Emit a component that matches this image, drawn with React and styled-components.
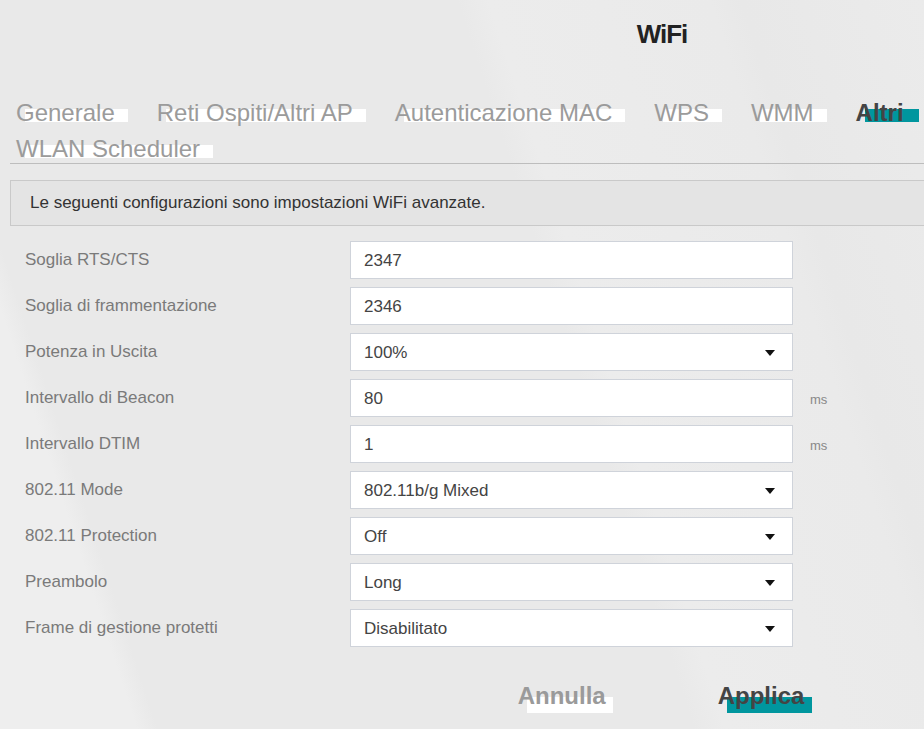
import React from "react";
import styled, { createGlobalStyle } from "styled-components";

const GlobalStyle = createGlobalStyle`
  html, body {
    margin: 0;
    padding: 0;
    height: 100%;
    overflow: hidden;
  }
  html {
    background: linear-gradient(
      72deg,
      #eeeeee 0px,
      #eeeeee 130px,
      #e9e9e9 150px,
      #e9e9e9 660px,
      #ececec 690px,
      #eaeaea 900px,
      #e8e8e8 930px,
      #ebebeb 1104px
    );
  }
  body {
    font-family: "Liberation Sans", Arial, sans-serif;
  }
`;

const Page = styled.div`
  width: 100%;
  min-height: 729px;
  overflow: hidden;
`;

const Header = styled.header`
  padding: 19px 0 0 400px;
  text-align: center;
`;

const Title = styled.h1`
  margin: 0;
  font-size: 26px;
  line-height: 30px;
  font-weight: 700;
  letter-spacing: -1px;
  color: #222;
`;

const Tabs = styled.nav`
  margin: 50px 0 0 10px;
  padding-left: 6px;
  display: flex;
  flex-wrap: wrap;
  column-gap: 29px;
  row-gap: 8px;
  border-bottom: 1px solid #bdbdbd;
`;

const Tab = styled.span`
  position: relative;
  isolation: isolate;
  font-size: 24px;
  line-height: 28px;
  padding-right: ${(p) => (p.$active ? 15 : 13)}px;
  color: ${(p) => (p.$active ? "#444" : "#9b9b9b")};
  font-weight: ${(p) => (p.$active ? 700 : 400)};
  cursor: pointer;
  &::after {
    content: "";
    position: absolute;
    left: 9px;
    right: 0;
    top: 10px;
    height: 13px;
    background: ${(p) => (p.$active ? "#00969e" : "#ffffff")};
    z-index: -1;
  }
`;

const InfoBox = styled.div`
  margin: 16px 0 0 10px;
  height: 46px;
  box-sizing: border-box;
  padding: 0 19px;
  border: 1px solid #c9c9c9;
  border-right: none;
  background: #e4e4e4;
  font-size: 17px;
  line-height: 44px;
  color: #333;
`;

const Form = styled.div`
  margin-top: 15px;
  padding-left: 25px;
  display: flex;
  flex-direction: column;
  gap: 8px;
`;

const Row = styled.div`
  display: grid;
  grid-template-columns: 325px 443px auto;
  align-items: center;
`;

const Label = styled.span`
  font-size: 17px;
  color: #7a7a7a;
`;

const Field = styled.div`
  height: 38px;
  box-sizing: border-box;
  border: 1px solid #cfd3da;
  background: #fff;
  padding: 1px 17px 0 13px;
  display: flex;
  align-items: center;
  justify-content: space-between;
  font-size: 17px;
  color: #444;
`;

const Unit = styled.span`
  margin-left: 17px;
  padding-top: 2px;
  font-size: 13px;
  color: #888;
`;

const Actions = styled.div`
  margin-top: 35px;
  padding-left: 406px;
  display: flex;
  justify-content: center;
  gap: 105px;
`;

const ActionButton = styled.button`
  position: relative;
  isolation: isolate;
  border: none;
  background: none;
  padding: 0 ${(p) => (p.$primary ? 8 : 7)}px 0 0;
  margin: 0;
  font-family: "Liberation Sans", Arial, sans-serif;
  font-size: 24px;
  line-height: 28px;
  font-weight: 700;
  color: ${(p) => (p.$primary ? "#444" : "#9a9a9a")};
  cursor: pointer;
  &::after {
    content: "";
    position: absolute;
    left: 9px;
    right: 0;
    top: 15px;
    height: 16px;
    background: ${(p) => (p.$primary ? "#00969e" : "#ffffff")};
    z-index: -1;
  }
`;

const Arrow = () => (
  <svg width="10" height="6" viewBox="0 0 10 6" aria-hidden="true">
    <polygon points="0,0 10,0 5,6" fill="#111" />
  </svg>
);

const tabs = [
  "Generale",
  "Reti Ospiti/Altri AP",
  "Autenticazione MAC",
  "WPS",
  "WMM",
  "Altri",
  "WLAN Scheduler",
];

const rows = [
  { label: "Soglia RTS/CTS", value: "2347" },
  { label: "Soglia di frammentazione", value: "2346" },
  { label: "Potenza in Uscita", value: "100%", select: true },
  { label: "Intervallo di Beacon", value: "80", unit: "ms" },
  { label: "Intervallo DTIM", value: "1", unit: "ms" },
  { label: "802.11 Mode", value: "802.11b/g Mixed", select: true },
  { label: "802.11 Protection", value: "Off", select: true },
  { label: "Preambolo", value: "Long", select: true },
  { label: "Frame di gestione protetti", value: "Disabilitato", select: true },
];

export default function App() {
  return (
    <>
      <GlobalStyle />
      <Page>
        <Header>
          <Title>WiFi</Title>
        </Header>
        <Tabs>
          {tabs.map((t) => (
            <Tab key={t} $active={t === "Altri"}>
              {t}
            </Tab>
          ))}
        </Tabs>
        <InfoBox>Le seguenti configurazioni sono impostazioni WiFi avanzate.</InfoBox>
        <Form>
          {rows.map((r) => (
            <Row key={r.label}>
              <Label>{r.label}</Label>
              <Field>
                <span>{r.value}</span>
                {r.select && <Arrow />}
              </Field>
              {r.unit ? <Unit>{r.unit}</Unit> : <span />}
            </Row>
          ))}
        </Form>
        <Actions>
          <ActionButton>Annulla</ActionButton>
          <ActionButton $primary>Applica</ActionButton>
        </Actions>
      </Page>
    </>
  );
}
